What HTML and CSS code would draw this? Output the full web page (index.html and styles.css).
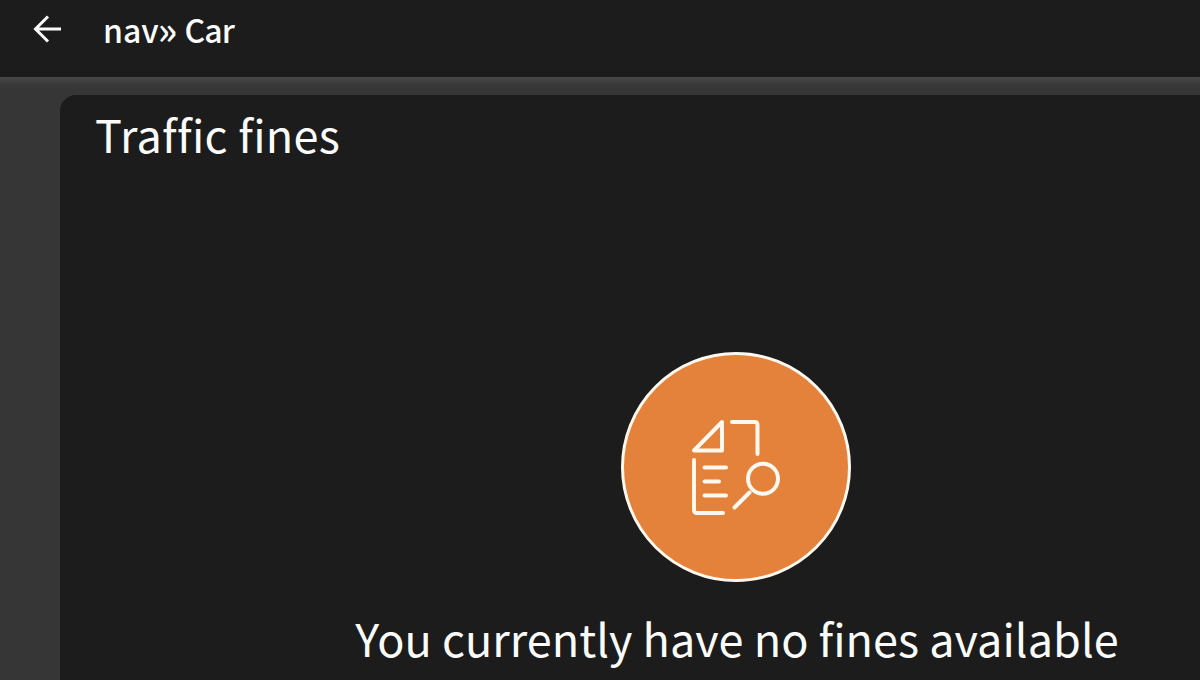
FILE: index.html
```html
<!DOCTYPE html>
<html lang="en">

<head>
    <meta charset="utf-8">
    <title>nav» Car</title>
    <meta name="viewport" content="width=device-width, initial-scale=1.0">

    <link rel="stylesheet" href="styles.css">
</head>

<body>
    <header class="top-bar">
        <svg class="back-icon" viewBox="0 0 30 30" width="30" height="30">
            <path d="M28 15H3M15 2.500L2.500 15L15 27.500" />
        </svg>
        <div class="top-title">nav<span class="chevrons">»</span> <span class="top-section">Car</span></div>
    </header>

    <main class="content">
        <section class="card">
            <h1>Traffic fines</h1>

            <div class="empty-state">
                <div class="empty-icon">
                    <svg viewBox="0 0 110 115" width="110" height="115">
                        <!-- Folded corner and page outline -->
                        <path d="M41 12V40.500H13Z" />
                        <path d="M51 12H73.500Q76.500 12 76.500 15V44" />
                        <path d="M13 50V100Q13 103 16 103H42" />
                        <!-- Text lines -->
                        <path d="M23.500 57.500H45M23.500 71.500H38M23.500 85.500H45" />
                        <!-- Magnifier -->
                        <circle cx="82" cy="68.700" r="15" />
                        <path d="M68.500 82.500L53.500 97.500" />
                    </svg>
                </div>
                <p class="empty-text">You currently have no fines available</p>
            </div>
        </section>
    </main>
</body>
</html>
```

FILE: styles.css
```css
* {
    box-sizing: border-box;
}

body {
    margin: 0;
    height: 100vh;
    display: flex;
    flex-direction: column;
    background-color: #363636;
    color: #fbfbfb;
    font-family: "Noto Sans CJK SC", "Noto Sans", sans-serif;
    font-variant-ligatures: none;
}

.top-bar {
    flex: none;
    display: flex;
    align-items: flex-start;
    height: 77px;
    padding: 14px 33px 0;
    background-color: #1c1c1c;
}

.back-icon {
    margin-right: 40px;
    fill: none;
    stroke: #fbfbfb;
    stroke-width: 3;
}

.top-title {
    margin-top: -1px;
    font-size: 32px;
    font-weight: 500;
    line-height: 32px;
    white-space: nowrap;
}

.chevrons {
    margin-left: -1px;
    font-size: 39px;
    line-height: 0;
    vertical-align: -2px;
}

.top-section {
    letter-spacing: -0.9px;
}

/* Light edge under the top bar */
.content {
    flex: 1;
    display: flex;
    padding: 18px 0 0 60px;
    background-image: linear-gradient(#484848, #363636 9px);
}

.card {
    flex: 1;
    padding: 14px 0 0 35px;
    border-top-left-radius: 16px;
    background-color: #1c1c1c;
}

h1 {
    margin: 0;
    font-size: 45px;
    font-weight: 400;
    line-height: 50px;
    letter-spacing: 0.3px;
}

.empty-state {
    display: flex;
    flex-direction: column;
    align-items: center;
    padding: 193px 0 0 177px;
}

.empty-icon {
    display: flex;
    align-items: center;
    justify-content: center;
    width: 230px;
    height: 230px;
    border: 3px solid #fff8ee;
    border-radius: 50%;
    background-color: #e4813a;
}

.empty-icon svg {
    fill: none;
    stroke: #fff8ee;
    stroke-width: 4;
    stroke-linecap: round;
    stroke-linejoin: round;
}

.empty-text {
    margin: 31px 0 0;
    padding-left: 2px;
    font-size: 45px;
    line-height: 50px;
    letter-spacing: 0.03px;
    white-space: nowrap;
}
```
